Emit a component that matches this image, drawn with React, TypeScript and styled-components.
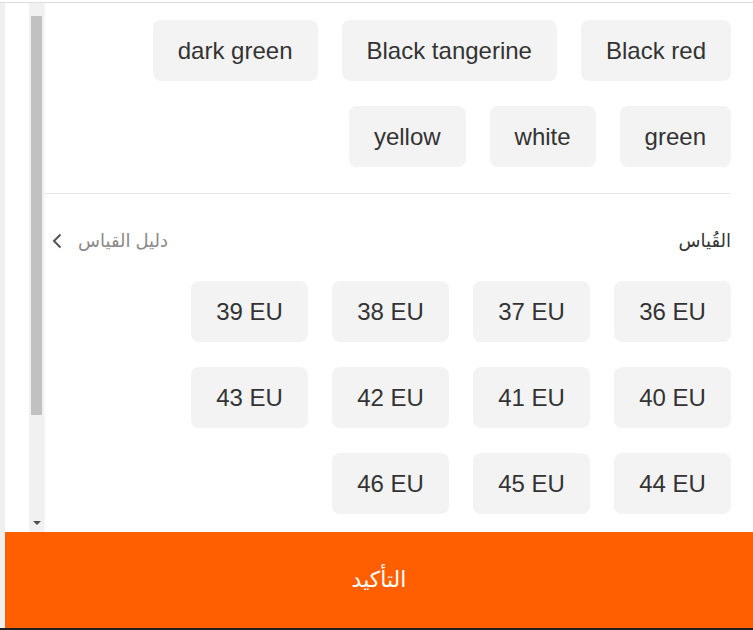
import styled, { createGlobalStyle } from "styled-components";

const GlobalStyle = createGlobalStyle`
  html, body {
    margin: 0;
    padding: 0;
    background: #fff;
    font-family: "Liberation Sans", "DejaVu Sans", Arial, sans-serif;
  }
  * {
    box-sizing: border-box;
  }
`;

const Page = styled.div`
  height: 630px;
  padding-top: 2px;
  display: flex;
  flex-direction: column;
`;

const Frame = styled.div`
  flex: 1;
  display: flex;
  flex-direction: column;
  min-height: 0;
  padding-left: 5px;
  background: #f0f0f0;
  border-top: 1px solid #dcdcdc;
  border-bottom: 2px solid #1e1e1e;
`;

const Sheet = styled.div`
  flex: 1;
  display: flex;
  flex-direction: column;
  min-height: 0;
  background: #fff;
`;

const Body = styled.div`
  flex: 1;
  min-height: 0;
  display: flex;
  margin-left: 24px;
`;

/* drawn scrollbar (the headless browser hides real ones) */
const ScrollTrack = styled.div`
  width: 16px;
  flex-shrink: 0;
  display: flex;
  flex-direction: column;
  background: #f1f1f1;
  border-right: 1px solid #f7f7f7;
`;

const ScrollButton = styled.div<{ down?: boolean }>`
  height: ${({ down }) => (down ? "18px" : "13px")};
  flex-shrink: 0;
  display: flex;
  align-items: center;
  justify-content: center;
  &::after {
    content: "";
    display: ${({ down }) => (down ? "block" : "none")};
    border-left: 4px solid transparent;
    border-right: 4px solid transparent;
    border-top: 4px solid #505050;
  }
`;

const ScrollRail = styled.div`
  flex: 1;
  padding: 0 2px;
`;

const Thumb = styled.div`
  height: 399px;
  background: #c1c1c1;
`;

const Content = styled.div`
  flex: 1;
  min-width: 0;
  overflow: hidden;
  direction: rtl;
  padding: 17px 22px 0 0;
`;

const ChipRow = styled.div<{ divided?: boolean; columns?: number }>`
  display: flex;
  flex-wrap: wrap;
  gap: 25px 24px;
  max-width: ${({ columns }) => (columns ? `${columns * 117 + (columns - 1) * 24}px` : "none")};
  padding-bottom: ${({ divided }) => (divided ? "26px" : "0")};
  border-bottom: ${({ divided }) => (divided ? "1px solid #e8e8e8" : "none")};
`;

const Chip = styled.div<{ fixed?: boolean }>`
  height: 61px;
  width: ${({ fixed }) => (fixed ? "117px" : "auto")};
  padding: 0 ${({ fixed }) => (fixed ? "0" : "25px")};
  display: flex;
  align-items: center;
  justify-content: center;
  background: #f3f3f3;
  border-radius: 8px;
  font-size: 24px;
  color: #333;
  direction: ltr;
  white-space: nowrap;
`;

const LabelRow = styled.div`
  display: flex;
  align-items: center;
  justify-content: space-between;
  padding: 30px 0 24px 7px;
  height: 87px;
`;

const Label = styled.div`
  font-size: 18px;
  color: #333;
`;

const Guide = styled.div`
  display: flex;
  align-items: center;
  gap: 16px;
  font-size: 18px;
  color: #8a8a8a;
`;

const Chevron = styled.svg`
  width: 10px;
  height: 16px;
  stroke: #555;
  stroke-width: 2;
  fill: none;
`;

const ConfirmButton = styled.button`
  height: 96px;
  flex-shrink: 0;
  border: none;
  background: #ff5f00;
  color: #fff;
  font-family: inherit;
  font-size: 22px;
  display: flex;
  align-items: center;
  justify-content: center;
  direction: rtl;
`;

const colors = ["Black red", "Black tangerine", "dark green", "green", "white", "yellow"];
const sizes = [36, 37, 38, 39, 40, 41, 42, 43, 44, 45, 46];

export default function App() {
  return (
    <>
      <GlobalStyle />
      <Page>
        <Frame>
          <Sheet>
            <Body>
              <ScrollTrack>
                <ScrollButton />
                <ScrollRail>
                  <Thumb />
                </ScrollRail>
                <ScrollButton down />
              </ScrollTrack>
              <Content>
                <ChipRow divided>
                  {colors.map((c) => (
                    <Chip key={c}>{c}</Chip>
                  ))}
                </ChipRow>
                <LabelRow>
                  <Label>القُياس</Label>
                  <Guide>
                    دليل القياس
                    <Chevron viewBox="0 0 10 16">
                      <polyline points="8.5,1.5 2,8 8.5,14.5" />
                    </Chevron>
                  </Guide>
                </LabelRow>
                <ChipRow columns={4}>
                  {sizes.map((s) => (
                    <Chip fixed key={s}>
                      {s} EU
                    </Chip>
                  ))}
                </ChipRow>
              </Content>
            </Body>
            <ConfirmButton>التأكيد</ConfirmButton>
          </Sheet>
        </Frame>
      </Page>
    </>
  );
}
